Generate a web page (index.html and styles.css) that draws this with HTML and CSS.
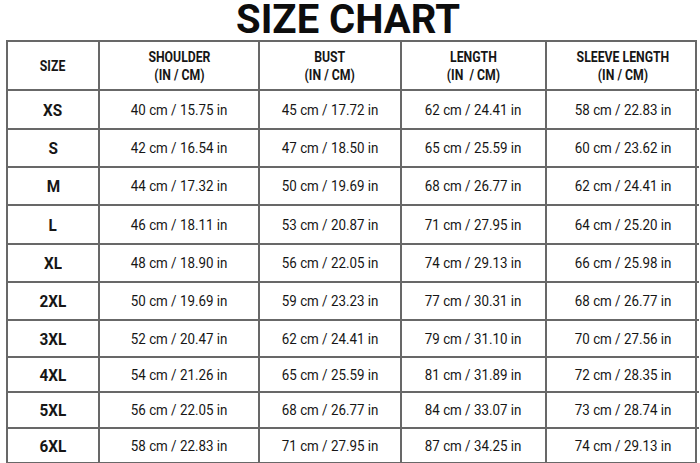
FILE: index.html
```html
<!DOCTYPE html>
<html lang="en">
<head>
<meta charset="utf-8">
<title>Size Chart</title>
<link rel="stylesheet" href="styles.css">
</head>
<body>
<main class="page">
  <h1 class="title">SIZE CHART</h1>
  <div class="chart">
    <div class="cell head"><span class="txt">SIZE</span></div>
    <div class="cell head"><span class="txt">SHOULDER<br>(IN / CM)</span></div>
    <div class="cell head"><span class="txt">BUST<br>(IN / CM)</span></div>
    <div class="cell head"><span class="txt">LENGTH<br>(IN &nbsp;/ CM)</span></div>
    <div class="cell head last-col"><span class="txt">SLEEVE LENGTH<br>(IN / CM)</span></div>

    <div class="cell size"><span class="txt">XS</span></div>
    <div class="cell"><span class="txt">40 cm / 15.75 in</span></div>
    <div class="cell"><span class="txt">45 cm / 17.72 in</span></div>
    <div class="cell"><span class="txt">62 cm / 24.41 in</span></div>
    <div class="cell last-col"><span class="txt">58 cm / 22.83 in</span></div>

    <div class="cell size"><span class="txt">S</span></div>
    <div class="cell"><span class="txt">42 cm / 16.54 in</span></div>
    <div class="cell"><span class="txt">47 cm / 18.50 in</span></div>
    <div class="cell"><span class="txt">65 cm / 25.59 in</span></div>
    <div class="cell last-col"><span class="txt">60 cm / 23.62 in</span></div>

    <div class="cell size"><span class="txt">M</span></div>
    <div class="cell"><span class="txt">44 cm / 17.32 in</span></div>
    <div class="cell"><span class="txt">50 cm / 19.69 in</span></div>
    <div class="cell"><span class="txt">68 cm / 26.77 in</span></div>
    <div class="cell last-col"><span class="txt">62 cm / 24.41 in</span></div>

    <div class="cell size"><span class="txt">L</span></div>
    <div class="cell"><span class="txt">46 cm / 18.11 in</span></div>
    <div class="cell"><span class="txt">53 cm / 20.87 in</span></div>
    <div class="cell"><span class="txt">71 cm / 27.95 in</span></div>
    <div class="cell last-col"><span class="txt">64 cm / 25.20 in</span></div>

    <div class="cell size"><span class="txt">XL</span></div>
    <div class="cell"><span class="txt">48 cm / 18.90 in</span></div>
    <div class="cell"><span class="txt">56 cm / 22.05 in</span></div>
    <div class="cell"><span class="txt">74 cm / 29.13 in</span></div>
    <div class="cell last-col"><span class="txt">66 cm / 25.98 in</span></div>

    <div class="cell size"><span class="txt">2XL</span></div>
    <div class="cell"><span class="txt">50 cm / 19.69 in</span></div>
    <div class="cell"><span class="txt">59 cm / 23.23 in</span></div>
    <div class="cell"><span class="txt">77 cm / 30.31 in</span></div>
    <div class="cell last-col"><span class="txt">68 cm / 26.77 in</span></div>

    <div class="cell size"><span class="txt">3XL</span></div>
    <div class="cell"><span class="txt">52 cm / 20.47 in</span></div>
    <div class="cell"><span class="txt">62 cm / 24.41 in</span></div>
    <div class="cell"><span class="txt">79 cm / 31.10 in</span></div>
    <div class="cell last-col"><span class="txt">70 cm / 27.56 in</span></div>

    <div class="cell size"><span class="txt">4XL</span></div>
    <div class="cell"><span class="txt">54 cm / 21.26 in</span></div>
    <div class="cell"><span class="txt">65 cm / 25.59 in</span></div>
    <div class="cell"><span class="txt">81 cm / 31.89 in</span></div>
    <div class="cell last-col"><span class="txt">72 cm / 28.35 in</span></div>

    <div class="cell size"><span class="txt">5XL</span></div>
    <div class="cell"><span class="txt">56 cm / 22.05 in</span></div>
    <div class="cell"><span class="txt">68 cm / 26.77 in</span></div>
    <div class="cell"><span class="txt">84 cm / 33.07 in</span></div>
    <div class="cell last-col"><span class="txt">73 cm / 28.74 in</span></div>

    <div class="cell size last-row"><span class="txt">6XL</span></div>
    <div class="cell last-row"><span class="txt">58 cm / 22.83 in</span></div>
    <div class="cell last-row"><span class="txt">71 cm / 27.95 in</span></div>
    <div class="cell last-row"><span class="txt">87 cm / 34.25 in</span></div>
    <div class="cell last-col last-row"><span class="txt">74 cm / 29.13 in</span></div>
  </div>
</main>
</body>
</html>
```
FILE: styles.css
```css
* {
  box-sizing: border-box;
}

html, body {
  margin: 0;
  padding: 0;
  background: #ffffff;
}

body {
  font-family: Roboto, "Liberation Sans", Arial, sans-serif;
  color: #161616;
  width: 700px;
  height: 463px;
  overflow: hidden;
}

.page {
  display: flex;
  flex-direction: column;
  align-items: flex-start;
}

.title {
  align-self: center;
  margin: 0;
  font-size: 40px;
  line-height: 39px;
  height: 40px;
  font-weight: 700;
  letter-spacing: 0;
  color: #0d0d0d;
  padding-right: 4px;
}

.chart {
  margin-left: 6px;
  display: grid;
  grid-template-columns: 92px 160px 142px 145px 152px;
  grid-template-rows: 49px 39px 38px 38px 39px 38px 38px 37px 35px 36px 33px;
  border: 2px solid #686868;
  width: 691px;
}

.cell {
  display: flex;
  align-items: center;
  justify-content: center;
  text-align: center;
  border-right: 2px solid #686868;
  border-bottom: 2px solid #686868;
  font-size: 15.5px;
  font-weight: 400;
  white-space: nowrap;
}

.last-col {
  border-right: none;
}

.last-row {
  border-bottom: none;
}

.txt {
  display: inline-block;
  transform: scaleX(0.86);
}

.head {
  font-size: 14px;
  font-weight: 700;
  line-height: 18px;
}

.head .txt {
  transform: scaleX(0.875);
}

.size {
  font-size: 17px;
  font-weight: 700;
}

.size .txt {
  transform: scaleX(0.9);
}
```
